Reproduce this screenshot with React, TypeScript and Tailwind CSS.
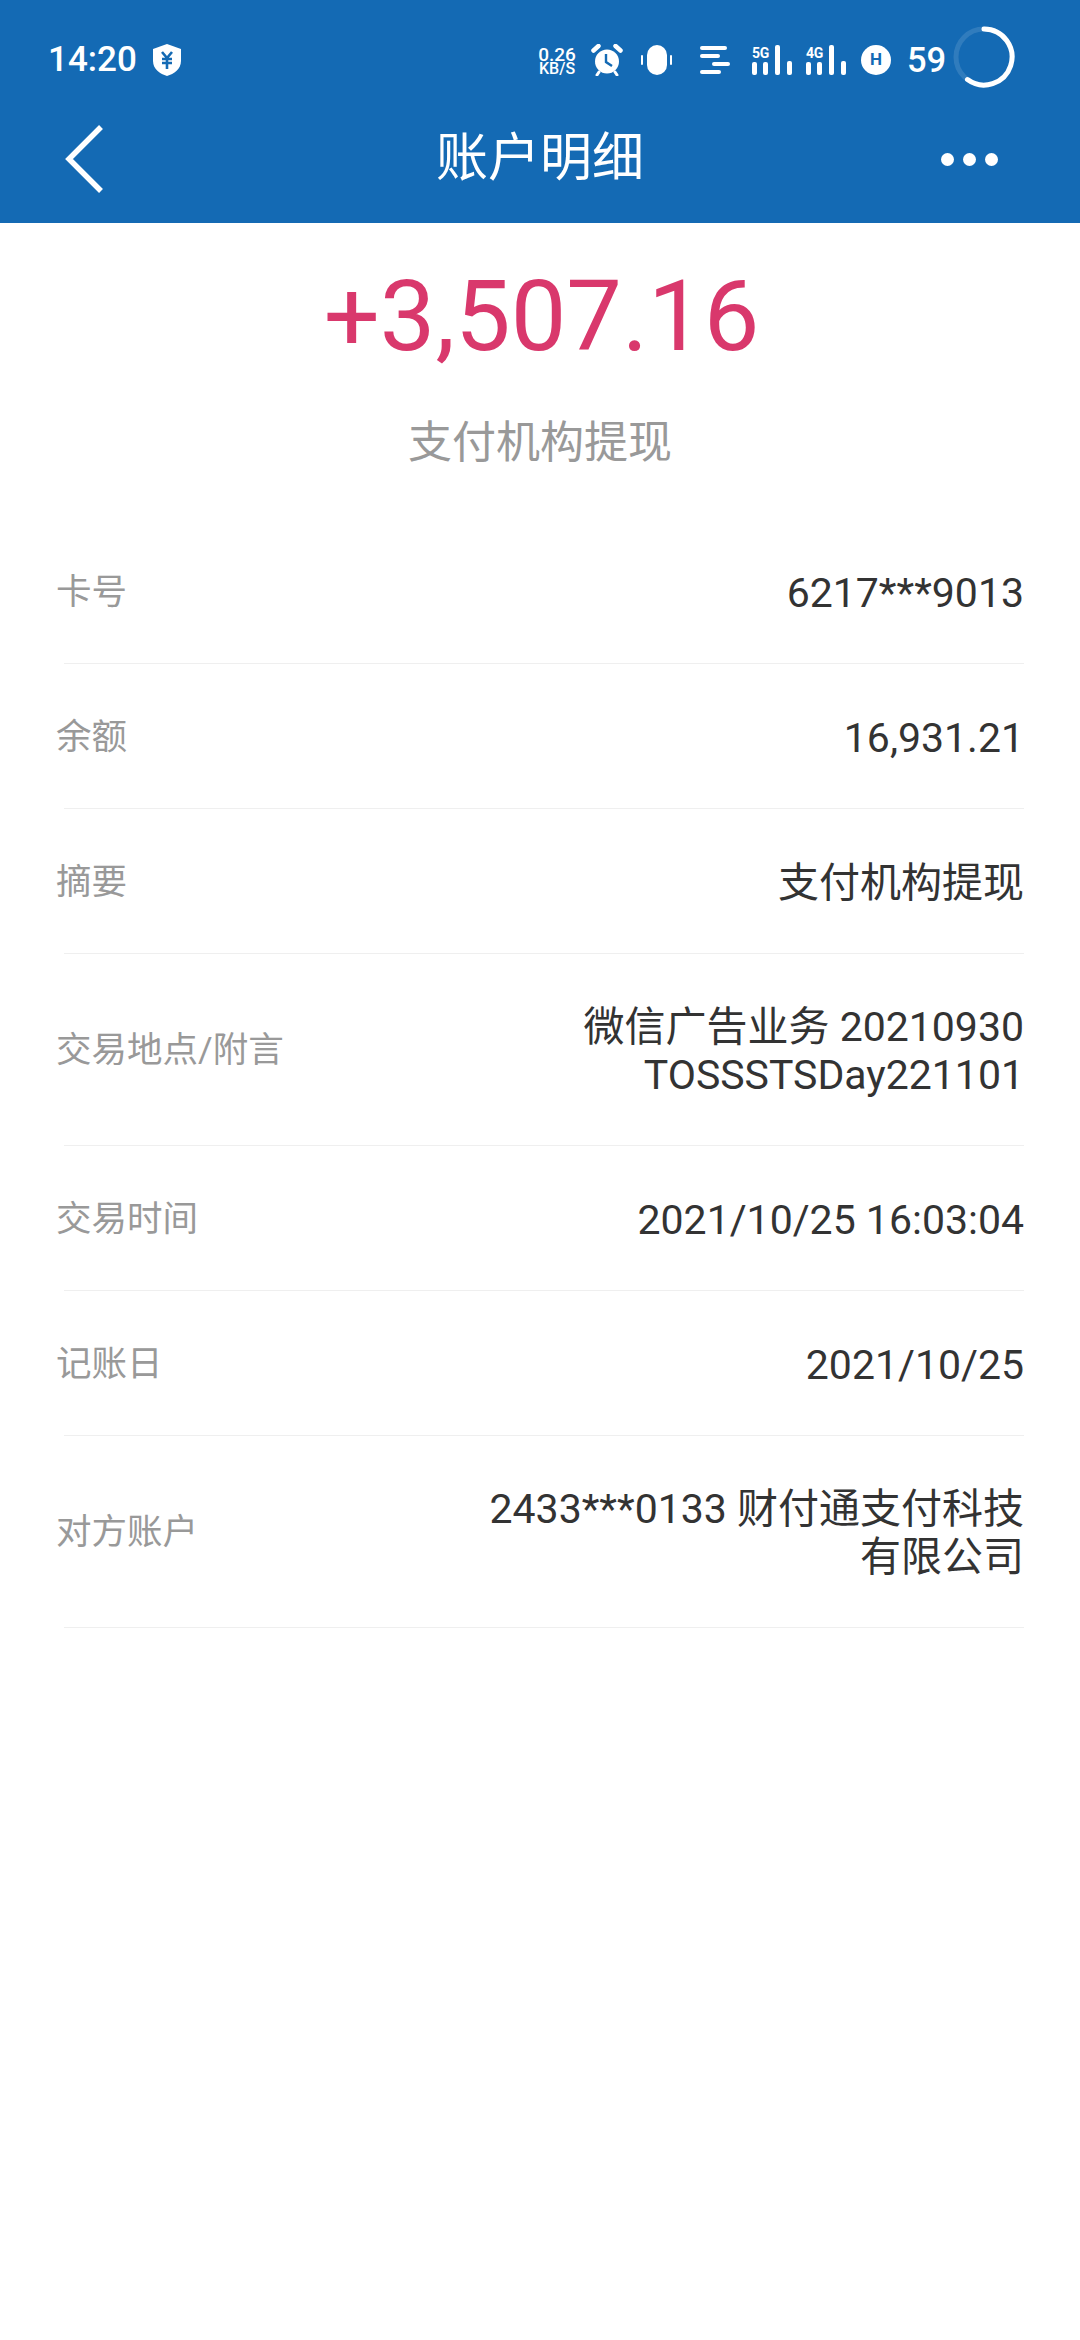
import React from 'react'

const ROWS: { label: string; value: string[] }[] = [
  { label: '卡号', value: ['6217***9013'] },
  { label: '余额', value: ['16,931.21'] },
  { label: '摘要', value: ['支付机构提现'] },
  { label: '交易地点/附言', value: ['微信广告业务 20210930', 'TOSSSTSDay221101'] },
  { label: '交易时间', value: ['2021/10/25 16:03:04'] },
  { label: '记账日', value: ['2021/10/25'] },
  { label: '对方账户', value: ['2433***0133 财付通支付科技', '有限公司'] },
]

function Signal({ tag }: { tag: string }) {
  return (
    <div className="relative h-[30px] w-[40px]">
      <span className="absolute left-0 top-[1px] text-[14px] font-bold leading-[14px] tracking-[-0.3px] text-white">{tag}</span>
      <svg viewBox="0 0 40 30" className="h-[30px] w-[40px]" fill="#fff">
        <rect x="0" y="17" width="5" height="13" rx="2" />
        <rect x="11" y="17" width="5" height="13" rx="2" />
        <rect x="23" y="0" width="5" height="30" rx="2" />
        <rect x="35" y="16" width="5" height="14" rx="2" />
      </svg>
    </div>
  )
}

function StatusBar() {
  return (
    <div className="flex h-[84px] items-center pl-[48px] pt-[35px] text-white">
      <span className="w-[87px] text-[35px] font-medium leading-[44px]">14:20</span>
      {/* 盾牌 */}
      <svg viewBox="0 0 28 32" className="ml-[18px] h-[32px] w-[28px]">
        <path d="M14 0 L28 5 V17 C28 25 21 30 14 32 C7 30 0 25 0 17 V5 Z" fill="#fff" />
        <path d="M9 8 L14 14 L19 8 M9 15 H19 M9 19 H19 M14 14 V25" fill="none" stroke="#146ab4" strokeWidth="2.6" />
      </svg>

      <div className="ml-[357px] flex w-[38px] flex-col items-center pt-[3px] font-medium">
        <div className="text-[19px] leading-[15px]">0.26</div>
        <div className="text-[16px] leading-[14px]">KB/S</div>
      </div>
      {/* 闹钟 */}
      <svg viewBox="0 0 32 32" className="ml-[15px] h-[32px] w-[32px]">
        <circle cx="16" cy="17.5" r="12" fill="#fff" />
        <path d="M2.5 6.5 L7.5 2 M29.5 6.5 L24.5 2" stroke="#fff" strokeWidth="4.5" strokeLinecap="round" />
        <path d="M8 28 L6 31 M24 28 L26 31" stroke="#fff" strokeWidth="3" strokeLinecap="round" />
        <path d="M15 10 V18 L21 22" fill="none" stroke="#146ab4" strokeWidth="2.4" />
      </svg>
      {/* 振动 */}
      <svg viewBox="0 0 31 30" className="ml-[18px] h-[30px] w-[31px]">
        <rect x="6" y="0" width="20" height="30" rx="10" fill="#fff" />
        <path d="M1 11 V19 M30 11 V19" stroke="#fff" strokeWidth="2" strokeLinecap="round" />
      </svg>
      {/* 通知 */}
      <svg viewBox="0 0 30 28" className="ml-[28px] h-[28px] w-[30px]" fill="#fff">
        <rect x="0" y="0" width="27" height="4" rx="2" />
        <rect x="0" y="8" width="20" height="4" rx="2" />
        <rect x="12" y="16" width="18" height="4" rx="2" />
        <rect x="0" y="24" width="21" height="4" rx="2" />
      </svg>
      <div className="ml-[22px]">
        <Signal tag="5G" />
      </div>
      <div className="ml-[14px]">
        <Signal tag="4G" />
      </div>
      {/* HD */}
      <div className="ml-[15px] flex h-[30px] w-[30px] items-center justify-center rounded-full bg-white text-[17px] font-bold leading-none text-[#146ab4]">
        H
      </div>
      <span className="ml-[16px] w-[38px] text-[34.5px] font-medium leading-[44px]">59</span>
      {/* 电量环 */}
      <svg viewBox="0 0 62 62" className="ml-[8px] mt-[-6px] h-[62px] w-[62px]" fill="none">
        <circle cx="31" cy="31" r="28" stroke="#fff" strokeOpacity="0.12" strokeWidth="5" />
        <path d="M31 3 A28 28 0 1 1 14.5 53.6" stroke="#fff" strokeWidth="5" strokeLinecap="round" />
      </svg>
    </div>
  )
}

function NavBar() {
  return (
    <div className="grid h-[139px] grid-cols-[1fr_auto_1fr] items-center pt-[11px]">
      <div className="pl-[64px]">
        <svg viewBox="0 0 40 70" className="h-[70px] w-[40px]" fill="none">
          <path d="M37 3 L5 35 L37 67" stroke="#fff" strokeWidth="5.5" />
        </svg>
      </div>
      <h1 className="text-[52px] font-normal leading-[60px] text-white">账户明细</h1>
      <div className="flex justify-end gap-[9px] pr-[82px]">
        <span className="h-[13px] w-[13px] rounded-full bg-white" />
        <span className="h-[13px] w-[13px] rounded-full bg-white" />
        <span className="h-[13px] w-[13px] rounded-full bg-white" />
      </div>
    </div>
  )
}

export default function App() {
  return (
    <div className="min-h-[2340px] bg-white font-['Roboto','Noto_Sans_CJK_SC',sans-serif]">
      <header className="bg-[#146ab4]">
        <StatusBar />
        <NavBar />
      </header>

      <div className="pt-[44px] text-center">
        <p className="pl-[3px] text-[99px] leading-[99px] text-[#d9386c]">+3,507.16</p>
        <p className="mt-[50px] text-[44px] leading-[54px] text-[#999999]">支付机构提现</p>
      </div>

      <div className="mt-[49px] px-[56px]">
        {ROWS.map((row) => (
          <div key={row.label} className="relative flex min-h-[145px] items-center justify-between py-[47px]">
            <span className="text-[35.5px] leading-[48px] text-[#999999]">{row.label}</span>
            <div className="pt-[2px] text-right text-[41px] leading-[48px] text-[#333333]">
              {row.value.map((line) => (
                <div key={line}>{line}</div>
              ))}
            </div>
            <div className="absolute bottom-0 left-[8px] right-0 h-px bg-[#efefef]" />
          </div>
        ))}
      </div>
    </div>
  )
}
